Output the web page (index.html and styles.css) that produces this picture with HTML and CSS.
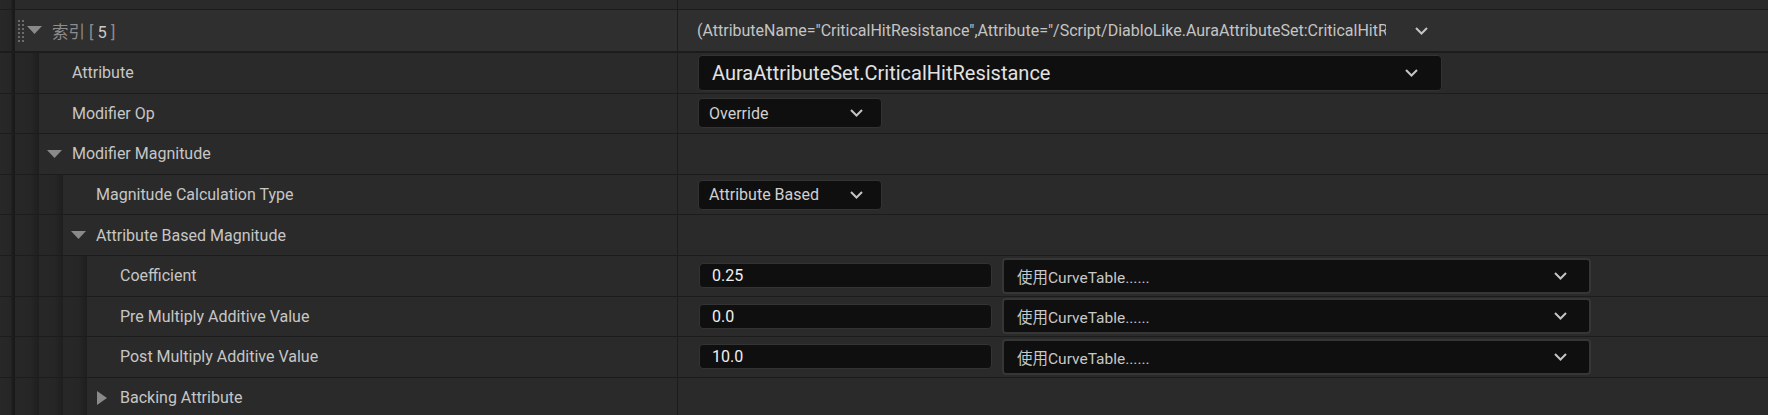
FILE: index.html
```html
<!DOCTYPE html>
<html>
<head>
<meta charset="utf-8">
<link rel="stylesheet" href="styles.css">
</head>
<body>
<div class="panel">
  <div class="row top">
    <div class="name"><span class="ind first"></span><span class="label"></span></div>
    <div class="value"></div>
  </div>

  <div class="row header">
    <div class="name"><span class="ind first"></span>
      <span class="label hdr">
        <svg class="grip" width="8" height="22" viewBox="0 0 8 22"><g fill="#6c6c6c"><rect x="0" y="0" width="2" height="2"/><rect x="4" y="0" width="2" height="2"/><rect x="0" y="4" width="2" height="2"/><rect x="4" y="4" width="2" height="2"/><rect x="0" y="8" width="2" height="2"/><rect x="4" y="8" width="2" height="2"/><rect x="0" y="12" width="2" height="2"/><rect x="4" y="12" width="2" height="2"/><rect x="0" y="16" width="2" height="2"/><rect x="4" y="16" width="2" height="2"/><rect x="0" y="20" width="2" height="2"/><rect x="4" y="20" width="2" height="2"/></g></svg>
        <svg class="tri-down hdr-tri" width="15" height="8" viewBox="0 0 15 8"><path d="M0 0H15L7.5 8Z" fill="#8a8a8a"/></svg>
        <span class="hdr-text">索引 [ <b>5</b> ]</span>
      </span>
    </div>
    <div class="value">
      <span class="struct-text">(AttributeName="CriticalHitResistance",Attribute="/Script/DiabloLike.AuraAttributeSet:CriticalHitResistance",AttributeOwner=None)</span>
      <svg class="chev" width="13" height="8" viewBox="0 0 13 8"><path d="M1 1L6.5 6.5L12 1" fill="none" stroke="#c4c4c4" stroke-width="2"/></svg>
    </div>
  </div>

  <div class="row">
    <div class="name"><span class="ind first"></span><span class="ind"></span><span class="label">Attribute</span></div>
    <div class="value">
      <div class="combo big"><span>AuraAttributeSet.CriticalHitResistance</span>
        <svg class="chev" width="13" height="8" viewBox="0 0 13 8"><path d="M1 1L6.5 6.5L12 1" fill="none" stroke="#c4c4c4" stroke-width="2"/></svg></div>
    </div>
  </div>

  <div class="row">
    <div class="name"><span class="ind first"></span><span class="ind"></span><span class="label">Modifier Op</span></div>
    <div class="value">
      <div class="combo small"><span>Override</span>
        <svg class="chev" width="13" height="8" viewBox="0 0 13 8"><path d="M1 1L6.5 6.5L12 1" fill="none" stroke="#c4c4c4" stroke-width="2"/></svg></div>
    </div>
  </div>

  <div class="row">
    <div class="name"><span class="ind first"></span><span class="ind"></span><span class="label"><svg class="tri-down" width="15" height="8" viewBox="0 0 15 8"><path d="M0 0H15L7.5 8Z" fill="#8a8a8a"/></svg>Modifier Magnitude</span></div>
    <div class="value"></div>
  </div>

  <div class="row">
    <div class="name"><span class="ind first"></span><span class="ind"></span><span class="ind"></span><span class="label">Magnitude Calculation Type</span></div>
    <div class="value">
      <div class="combo small"><span>Attribute Based</span>
        <svg class="chev" width="13" height="8" viewBox="0 0 13 8"><path d="M1 1L6.5 6.5L12 1" fill="none" stroke="#c4c4c4" stroke-width="2"/></svg></div>
    </div>
  </div>

  <div class="row">
    <div class="name"><span class="ind first"></span><span class="ind"></span><span class="ind"></span><span class="label"><svg class="tri-down" width="15" height="8" viewBox="0 0 15 8"><path d="M0 0H15L7.5 8Z" fill="#8a8a8a"/></svg>Attribute Based Magnitude</span></div>
    <div class="value"></div>
  </div>

  <div class="row">
    <div class="name"><span class="ind first"></span><span class="ind"></span><span class="ind"></span><span class="ind"></span><span class="label">Coefficient</span></div>
    <div class="value">
      <div class="num">0.25</div>
      <div class="combo curve"><span>使用CurveTable......</span>
        <svg class="chev" width="13" height="8" viewBox="0 0 13 8"><path d="M1 1L6.5 6.5L12 1" fill="none" stroke="#c4c4c4" stroke-width="2"/></svg></div>
    </div>
  </div>

  <div class="row">
    <div class="name"><span class="ind first"></span><span class="ind"></span><span class="ind"></span><span class="ind"></span><span class="label">Pre Multiply Additive Value</span></div>
    <div class="value">
      <div class="num">0.0</div>
      <div class="combo curve"><span>使用CurveTable......</span>
        <svg class="chev" width="13" height="8" viewBox="0 0 13 8"><path d="M1 1L6.5 6.5L12 1" fill="none" stroke="#c4c4c4" stroke-width="2"/></svg></div>
    </div>
  </div>

  <div class="row">
    <div class="name"><span class="ind first"></span><span class="ind"></span><span class="ind"></span><span class="ind"></span><span class="label">Post Multiply Additive Value</span></div>
    <div class="value">
      <div class="num">10.0</div>
      <div class="combo curve"><span>使用CurveTable......</span>
        <svg class="chev" width="13" height="8" viewBox="0 0 13 8"><path d="M1 1L6.5 6.5L12 1" fill="none" stroke="#c4c4c4" stroke-width="2"/></svg></div>
    </div>
  </div>

  <div class="row">
    <div class="name"><span class="ind first"></span><span class="ind"></span><span class="ind"></span><span class="ind"></span><span class="label"><svg class="tri-right" width="10" height="14" viewBox="0 0 10 14"><path d="M0 0L10 7L0 14Z" fill="#8a8a8a"/></svg>Backing Attribute</span></div>
    <div class="value"></div>
  </div>
</div>
</body>
</html>
```

FILE: styles.css
```css
html, body {
  margin: 0;
  padding: 0;
  background: #2a2a2a;
  overflow: hidden;
}
body {
  width: 1768px;
  height: 415px;
  font-family: Roboto, "Noto Sans CJK SC", sans-serif;
  font-size: 16px;
  color: #c6c6c6;
}
.panel {
  display: flex;
  flex-direction: column;
}
.row {
  display: flex;
  height: 39.6px;
  border-bottom: 1px solid #1c1c1c;
  background: #2a2a2a;
  flex-shrink: 0;
}
.row.top {
  height: 9px;
  border-bottom-width: 1px;
}
.row.header {
  height: 41px;
  background: #2f2f2f;
  border-bottom-width: 2px;
}
.name {
  width: 677px;
  display: flex;
  flex-shrink: 0;
}
.ind {
  width: 24px;
  flex-shrink: 0;
  background: linear-gradient(to right, #272727 0%, #262626 65%, #1e1e1e 100%);
}
.ind.first {
  width: 15px;
  background: linear-gradient(to right, #282828 0%, #262626 70%, #1a1a1a 87%, #1a1a1a 100%);
}
.label {
  flex: 1;
  display: flex;
  align-items: center;
  padding-left: 33px;
  position: relative;
  white-space: nowrap;
}
.label .tri-down {
  position: absolute;
  left: 8px;
  top: 16px;
}
.label .tri-right {
  position: absolute;
  left: 10px;
  top: 13px;
}
.label.hdr {
  padding-left: 0;
}
.grip {
  margin-left: 3px;
  margin-right: 1px;
}
.label .hdr-tri {
  position: static;
  margin-right: 10px;
  margin-top: -2px;
}
.hdr-text {
  color: #8c8c8c;
  font-size: 16.5px;
}
.hdr-text b {
  font-weight: normal;
  color: #c8c8c8;
}
.value {
  flex: 1;
  border-left: 1px solid #1c1c1c;
  display: flex;
  align-items: center;
  padding-left: 20px;
  min-width: 0;
}
.struct-text {
  width: 689px;
  overflow: hidden;
  white-space: nowrap;
  color: #c4c4c4;
  font-size: 16px;
  margin-left: -1px;
}
.header .chev {
  margin-left: 29px;
}
.combo {
  display: flex;
  align-items: center;
  justify-content: space-between;
  background: #0f0f0f;
  border: 1px solid #333333;
  border-radius: 4px;
  box-sizing: border-box;
  white-space: nowrap;
}
.combo.big {
  width: 744px;
  height: 36px;
  padding: 0 23px 0 13px;
  font-size: 20px;
  color: #e2e2e2;
}
.combo.small {
  width: 184px;
  height: 30px;
  padding: 0 18px 0 10px;
  font-size: 16px;
  color: #d0d0d0;
}
.num {
  width: 293px;
  height: 25px;
  box-sizing: border-box;
  background: #0f0f0f;
  border: 1px solid #333333;
  border-radius: 4px;
  padding-left: 12px;
  display: flex;
  align-items: center;
  color: #f0f0f0;
  font-size: 16px;
  margin-left: 1px;
}
.combo.curve {
  width: 589px;
  height: 36px;
  margin-left: 10px;
  padding: 0 22px 0 13px;
  font-size: 15.5px;
  color: #c8c8c8;
  border: 2px solid #363636;
}
```
